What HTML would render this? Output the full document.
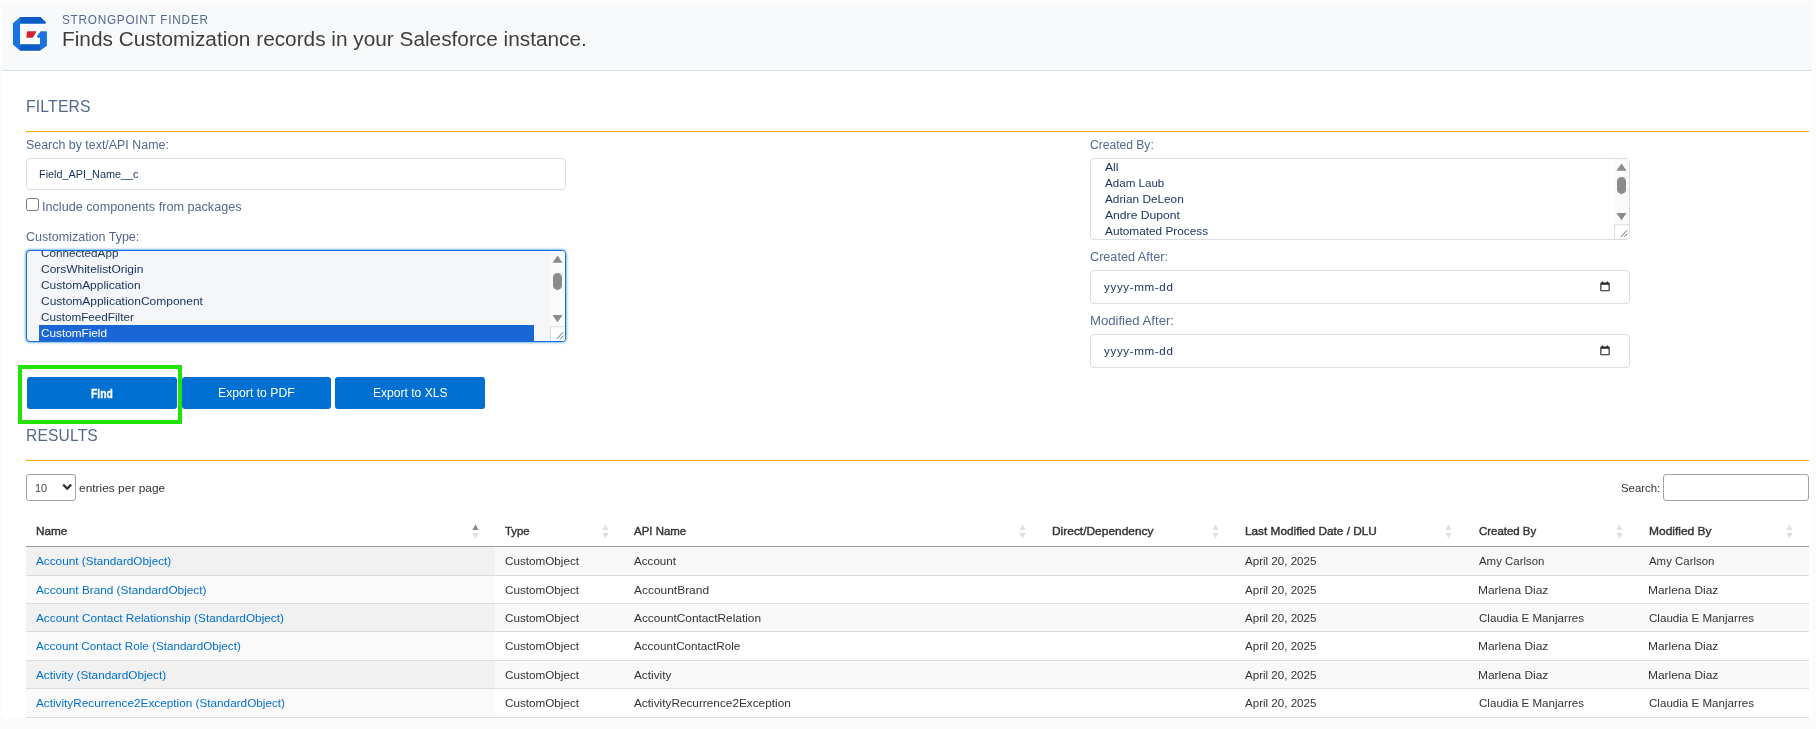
<!DOCTYPE html>
<html><head><meta charset="utf-8"><title>Strongpoint Finder</title>
<style>
*{box-sizing:border-box;margin:0;padding:0}
html,body{width:1816px;height:729px;overflow:hidden;background:#fcfcfc;font-family:"Liberation Sans",sans-serif}
.abs{position:absolute}
.t{position:absolute;white-space:nowrap;line-height:1;transform-origin:0 0;font-family:"Liberation Sans",sans-serif}
.line{position:absolute;height:1px;background:#ffa500;left:26px;width:1783px}
.inp{position:absolute;border:1px solid #d8dde6;border-radius:4px;background:#fff}
.btn{position:absolute;top:377px;height:32px;background:#0070d2;border-radius:3px}
.rb{position:absolute;left:26px;width:1783px;height:1px;background:#dddddd}
</style></head><body>
<div id="root" style="position:absolute;left:0;top:0;width:1816px;height:729px;will-change:transform;overflow:hidden">

<div class="abs" style="left:2px;top:3px;width:1810px;height:716px;background:#fff"></div>
<div class="abs" style="left:2px;top:3px;width:1810px;height:68px;background:#f7f9fb;border-bottom:1px solid #d8dde6"></div>
<svg class="abs" style="left:8px;top:12px" width="44" height="44" viewBox="8 12 44 44"><g stroke="#fff" stroke-width="1.3" stroke-linejoin="round"><path d="M20.07 16.95 H40.6 L46 22.3 Q46.4 23.77 45 23.77 H20.07 V44.3 H40 V37.65 H37.3 L37.15 36 L40.6 31.3 H46.9 V45.8 L40 50.8 H20.07 L12.95 44.6 V23.16 Z" fill="#fff"/><path d="M27.6 31.3 H36.67 L32.74 37.65 H27 Q26.3 37.65 26.4 37 L26.9 31.9 Q27 31.3 27.6 31.3 Z" fill="#fff"/></g><path d="M20.07 16.95 H40.6 L46 22.3 Q46.5 23.77 45 23.77 H20.07 Z" fill="#0b5cc4"/><path d="M20.07 16.95 L12.95 23.16 V44.6 L20.07 50.8 Z" fill="#1a73e2"/><path d="M20.07 44.2 H40 V50.8 H20.07 Z" fill="#0b5cc4"/><path d="M40 50.8 L46.9 45.8 V32 Q46.9 31.3 46.2 31.3 H40.6 L37.15 36 Q36.8 37.65 38 37.65 H40 Z" fill="#1a73e2"/><path d="M27.7 31.3 H36.67 L32.74 37.65 H27.1 Q26.3 37.65 26.4 36.9 L26.9 32 Q27 31.3 27.7 31.3 Z" fill="#d2232f"/></svg>
<div class="line" style="top:131px"></div><div class="line" style="top:460px"></div>
<div class="inp" style="left:26px;top:158px;width:540px;height:32px"></div>
<div class="abs" style="left:26px;top:198px;width:13px;height:13px;border:1px solid #767676;border-radius:2.5px;background:#fff"></div>
<div class="abs" style="left:26px;top:250px;width:540px;height:91.5px;border:1px solid #1b6fd8;border-radius:4px;background:#f4f6f9;box-shadow:0 0 3px #0070d2"></div>
<div class="abs" style="left:27px;top:251px;width:538px;height:89.5px;overflow:hidden;border-radius:3px"><div class="abs" style="left:-27px;top:-251px;width:1816px;height:729px"><div class="abs" style="left:39px;top:325px;width:495px;height:17px;background:#1a66d6"></div><div class="t" style="left:41.30px;top:248.00px;color:#16325c;font-size:11.5px;font-weight:400;;transform:scaleX(1.0171)">ConnectedApp</div>
<div class="t" style="left:41.30px;top:264.00px;color:#16325c;font-size:11.5px;font-weight:400;;transform:scaleX(1.0398)">CorsWhitelistOrigin</div>
<div class="t" style="left:41.30px;top:280.00px;color:#16325c;font-size:11.5px;font-weight:400;;transform:scaleX(1.0385)">CustomApplication</div>
<div class="t" style="left:41.30px;top:296.00px;color:#16325c;font-size:11.5px;font-weight:400;;transform:scaleX(1.0423)">CustomApplicationComponent</div>
<div class="t" style="left:41.30px;top:312.00px;color:#16325c;font-size:11.5px;font-weight:400;;transform:scaleX(1.0154)">CustomFeedFilter</div>
<div class="t" style="left:41.30px;top:328.00px;color:#ffffff;font-size:11.5px;font-weight:400;;transform:scaleX(1.0219)">CustomField</div><div class="abs" style="left:550px;top:251px;width:15px;height:90px;background:#fafafa"></div><svg class="abs" style="left:550px;top:251px" width="15" height="90" viewBox="0 0 15 90"><path d="M7.5 4.599999999999994 l4.7 6.6 q.3 .6 -.5 .6 h-8.4 q-.8 0 -.5 -.6 Z" fill="#8b8b8b"/><rect x="3" y="21.899999999999977" width="9" height="17" rx="4.5" fill="#8b8b8b"/><path d="M7.5 71.2 l4.7 -6.6 q.3 -.6 -.5 -.6 h-8.4 q-.8 0 -.5 .6 Z" fill="#8b8b8b"/><rect x="0.5" y="75.80000000000001" width="15" height="14.5" fill="#fff" stroke="#dcdcdc" stroke-width="1"/><path d="M7 87.80000000000001 L13 81.30000000000001 M10.5 87.80000000000001 L13.5 84.60000000000001" stroke="#555" stroke-width="0.9" fill="none"/></svg></div></div>
<div class="inp" style="left:1090px;top:158px;width:540px;height:81.5px"></div>
<div class="abs" style="left:1091px;top:159px;width:538px;height:79.5px;overflow:hidden;border-radius:3px"><div class="abs" style="left:-1091px;top:-159px;width:1816px;height:729px"><div class="abs" style="left:1614px;top:159px;width:15px;height:80px;background:#fafafa"></div><svg class="abs" style="left:1614px;top:159px" width="15" height="80" viewBox="0 0 15 80"><path d="M7.5 4.599999999999994 l4.7 6.6 q.3 .6 -.5 .6 h-8.4 q-.8 0 -.5 -.6 Z" fill="#8b8b8b"/><rect x="3" y="17.900000000000006" width="9" height="17" rx="4.5" fill="#8b8b8b"/><path d="M7.5 61.2 l4.7 -6.6 q.3 -.6 -.5 -.6 h-8.4 q-.8 0 -.5 .6 Z" fill="#8b8b8b"/><rect x="0.5" y="65.80000000000001" width="15" height="14.5" fill="#fff" stroke="#dcdcdc" stroke-width="1"/><path d="M7 77.80000000000001 L13 71.30000000000001 M10.5 77.80000000000001 L13.5 74.60000000000001" stroke="#555" stroke-width="0.9" fill="none"/></svg></div></div>
<div class="inp" style="left:1090px;top:270px;width:540px;height:34px"></div>
<div class="inp" style="left:1090px;top:334px;width:540px;height:34px"></div>
<svg class="abs" style="left:1600px;top:281px" width="10" height="11" viewBox="0 0 10 11"><path d="M1.9 0.4 h1.3 v1 h3.6 v-1 h1.3 v1 h0.6 q1 0 1 1 v6.9 q0 1 -1 1 h-7.4 q-1 0 -1 -1 v-6.9 q0 -1 1 -1 h0.6 Z M1.4 3.7 v5.5 h7.2 v-5.5 Z" fill="#222" fill-rule="evenodd"/></svg><svg class="abs" style="left:1600px;top:345px" width="10" height="11" viewBox="0 0 10 11"><path d="M1.9 0.4 h1.3 v1 h3.6 v-1 h1.3 v1 h0.6 q1 0 1 1 v6.9 q0 1 -1 1 h-7.4 q-1 0 -1 -1 v-6.9 q0 -1 1 -1 h0.6 Z M1.4 3.7 v5.5 h7.2 v-5.5 Z" fill="#222" fill-rule="evenodd"/></svg>
<div class="btn" style="left:27px;width:150px"></div><div class="btn" style="left:181.5px;width:149.5px"></div><div class="btn" style="left:335px;width:150px"></div>
<div class="abs" style="left:18px;top:365px;width:164.3px;height:59px;border:4px solid #22e305"></div>
<div class="abs" style="left:26px;top:474px;width:50px;height:27px;border:1px solid #a3a3a3;border-radius:3px;background:#fff"></div>
<svg class="abs" style="left:62px;top:483px" width="11" height="9" viewBox="0 0 11 9"><path d="M2 2.4 L5.2 5.6 L8.4 2.4" stroke="#333" stroke-width="2.2" fill="none" stroke-linecap="square" stroke-linejoin="miter"/></svg>
<div class="abs" style="left:1663px;top:474px;width:146px;height:27px;border:1px solid #a3a3a3;border-radius:3px;background:#fff"></div>
<div class="abs" style="left:26px;top:547px;width:1783px;height:28px;background:#f9f9f9"></div><div class="abs" style="left:26px;top:547px;width:468.6px;height:28px;background:#f1f1f1"></div>
<div class="abs" style="left:26px;top:576px;width:1783px;height:27px;background:#ffffff"></div><div class="abs" style="left:26px;top:576px;width:468.6px;height:27px;background:#fafafa"></div>
<div class="abs" style="left:26px;top:604px;width:1783px;height:27px;background:#f9f9f9"></div><div class="abs" style="left:26px;top:604px;width:468.6px;height:27px;background:#f1f1f1"></div>
<div class="abs" style="left:26px;top:632px;width:1783px;height:28px;background:#ffffff"></div><div class="abs" style="left:26px;top:632px;width:468.6px;height:28px;background:#fafafa"></div>
<div class="abs" style="left:26px;top:661px;width:1783px;height:27px;background:#f9f9f9"></div><div class="abs" style="left:26px;top:661px;width:468.6px;height:27px;background:#f1f1f1"></div>
<div class="abs" style="left:26px;top:689px;width:1783px;height:28px;background:#ffffff"></div><div class="abs" style="left:26px;top:689px;width:468.6px;height:28px;background:#fafafa"></div>
<div class="rb" style="top:575px"></div>
<div class="rb" style="top:603px"></div>
<div class="rb" style="top:631px"></div>
<div class="rb" style="top:660px"></div>
<div class="rb" style="top:688px"></div>
<div class="rb" style="top:717px"></div>
<div class="rb" style="top:546px;background:#9c9c9c"></div>
<svg class="abs" style="left:471.7px;top:524px" width="7" height="15" viewBox="0 0 7 15"><path d="M3.5 0.3 L6.55 5.9 H0.45 Z" fill="#8a8a8a"/><path d="M0.45 9.1 H6.55 L3.5 14.7 Z" fill="#e0e0e0"/></svg>
<svg class="abs" style="left:601.7px;top:524px" width="7" height="15" viewBox="0 0 7 15"><path d="M3.5 0.3 L6.55 5.9 H0.45 Z" fill="#e0e0e0"/><path d="M0.45 9.1 H6.55 L3.5 14.7 Z" fill="#e0e0e0"/></svg>
<svg class="abs" style="left:1018.6px;top:524px" width="7" height="15" viewBox="0 0 7 15"><path d="M3.5 0.3 L6.55 5.9 H0.45 Z" fill="#e0e0e0"/><path d="M0.45 9.1 H6.55 L3.5 14.7 Z" fill="#e0e0e0"/></svg>
<svg class="abs" style="left:1211.8px;top:524px" width="7" height="15" viewBox="0 0 7 15"><path d="M3.5 0.3 L6.55 5.9 H0.45 Z" fill="#e0e0e0"/><path d="M0.45 9.1 H6.55 L3.5 14.7 Z" fill="#e0e0e0"/></svg>
<svg class="abs" style="left:1445.2px;top:524px" width="7" height="15" viewBox="0 0 7 15"><path d="M3.5 0.3 L6.55 5.9 H0.45 Z" fill="#e0e0e0"/><path d="M0.45 9.1 H6.55 L3.5 14.7 Z" fill="#e0e0e0"/></svg>
<svg class="abs" style="left:1615.8px;top:524px" width="7" height="15" viewBox="0 0 7 15"><path d="M3.5 0.3 L6.55 5.9 H0.45 Z" fill="#e0e0e0"/><path d="M0.45 9.1 H6.55 L3.5 14.7 Z" fill="#e0e0e0"/></svg>
<svg class="abs" style="left:1786px;top:524px" width="7" height="15" viewBox="0 0 7 15"><path d="M3.5 0.3 L6.55 5.9 H0.45 Z" fill="#e0e0e0"/><path d="M0.45 9.1 H6.55 L3.5 14.7 Z" fill="#e0e0e0"/></svg>
<div class="abs" style="left:0;top:718px;width:1816px;height:11px;background:#fbfbfb"></div>
<div class="t" style="left:61.62px;top:14.00px;color:#54698d;font-size:12px;font-weight:400;letter-spacing:0.75px;transform:scaleX(0.9823)">STRONGPOINT FINDER</div>
<div class="t" style="left:62.06px;top:29.00px;color:#3e3e3c;font-size:20px;font-weight:400;;transform:scaleX(1.0400)">Finds Customization records in your Salesforce instance.</div>
<div class="t" style="left:25.57px;top:98.00px;color:#54698d;font-size:17px;font-weight:400;letter-spacing:0.2px;transform:scaleX(0.9250)">FILTERS</div>
<div class="t" style="left:25.58px;top:427.00px;color:#54698d;font-size:17px;font-weight:400;letter-spacing:0.2px;transform:scaleX(0.9156)">RESULTS</div>
<div class="t" style="left:25.57px;top:139.00px;color:#54698d;font-size:12px;font-weight:400;;transform:scaleX(1.0346)">Search by text/API Name:</div>
<div class="t" style="left:39.11px;top:169.00px;color:#16325c;font-size:11px;font-weight:400;;transform:scaleX(0.9860)">Field_API_Name__c</div>
<div class="t" style="left:41.85px;top:201.00px;color:#54698d;font-size:12px;font-weight:400;;transform:scaleX(1.0537)">Include components from packages</div>
<div class="t" style="left:26.00px;top:231.00px;color:#54698d;font-size:12px;font-weight:400;;transform:scaleX(1.0444)">Customization Type:</div>
<div class="t" style="left:1090.40px;top:139.00px;color:#54698d;font-size:12px;font-weight:400;;transform:scaleX(1.0063)">Created By:</div>
<div class="t" style="left:1090.40px;top:251.00px;color:#54698d;font-size:12px;font-weight:400;;transform:scaleX(1.0534)">Created After:</div>
<div class="t" style="left:1089.51px;top:315.00px;color:#54698d;font-size:12px;font-weight:400;;transform:scaleX(1.0947)">Modified After:</div>
<div class="t" style="left:1103.70px;top:282.00px;color:#16325c;font-size:11px;font-weight:400;letter-spacing:0.6px;transform:scaleX(1.0554)">yyyy-mm-dd</div>
<div class="t" style="left:1103.70px;top:346.00px;color:#16325c;font-size:11px;font-weight:400;letter-spacing:0.6px;transform:scaleX(1.0554)">yyyy-mm-dd</div>
<div class="t" style="left:1104.80px;top:162.00px;color:#16325c;font-size:11.5px;font-weight:400;;transform:scaleX(1.0583)">All</div>
<div class="t" style="left:1104.80px;top:178.00px;color:#16325c;font-size:11.5px;font-weight:400;;transform:scaleX(1.0085)">Adam Laub</div>
<div class="t" style="left:1104.80px;top:194.00px;color:#16325c;font-size:11.5px;font-weight:400;;transform:scaleX(1.0263)">Adrian DeLeon</div>
<div class="t" style="left:1104.80px;top:210.00px;color:#16325c;font-size:11.5px;font-weight:400;;transform:scaleX(1.0563)">Andre Dupont</div>
<div class="t" style="left:1104.80px;top:226.00px;color:#16325c;font-size:11.5px;font-weight:400;;transform:scaleX(1.0270)">Automated Process</div>
<div class="t" style="left:90.94px;top:388.00px;color:#ffffff;font-size:12px;font-weight:700;-webkit-text-stroke:0.3px #fff;transform:scaleX(0.8583)">Find</div>
<div class="t" style="left:218.32px;top:387.00px;color:#ffffff;font-size:12.5px;font-weight:400;;transform:scaleX(0.9779)">Export to PDF</div>
<div class="t" style="left:373.43px;top:387.00px;color:#ffffff;font-size:12.5px;font-weight:400;;transform:scaleX(0.9658)">Export to XLS</div>
<div class="t" style="left:34.95px;top:483.00px;color:#444;font-size:11.5px;font-weight:400;;transform:scaleX(0.9500)">10</div>
<div class="t" style="left:78.90px;top:483.00px;color:#333333;font-size:11.5px;font-weight:400;;transform:scaleX(1.0373)">entries per page</div>
<div class="t" style="left:1621.00px;top:483.00px;color:#333333;font-size:11.5px;font-weight:400;;transform:scaleX(0.9897)">Search:</div>
<div class="t" style="left:36.20px;top:526.00px;color:#333333;font-size:11.5px;font-weight:400;-webkit-text-stroke:0.4px #333;transform:scaleX(1.0226)">Name</div>
<div class="t" style="left:505.20px;top:526.00px;color:#333333;font-size:11.5px;font-weight:400;-webkit-text-stroke:0.4px #333;transform:scaleX(0.9800)">Type</div>
<div class="t" style="left:634.20px;top:526.00px;color:#333333;font-size:11.5px;font-weight:400;-webkit-text-stroke:0.4px #333;transform:scaleX(0.9962)">API Name</div>
<div class="t" style="left:1051.80px;top:526.00px;color:#333333;font-size:11.5px;font-weight:400;-webkit-text-stroke:0.4px #333;transform:scaleX(1.0378)">Direct/Dependency</div>
<div class="t" style="left:1244.80px;top:526.00px;color:#333333;font-size:11.5px;font-weight:400;-webkit-text-stroke:0.4px #333;transform:scaleX(1.0258)">Last Modified Date / DLU</div>
<div class="t" style="left:1478.50px;top:526.00px;color:#333333;font-size:11.5px;font-weight:400;-webkit-text-stroke:0.4px #333;transform:scaleX(0.9931)">Created By</div>
<div class="t" style="left:1649.00px;top:526.00px;color:#333333;font-size:11.5px;font-weight:400;-webkit-text-stroke:0.4px #333;transform:scaleX(1.0417)">Modified By</div>
<div class="t" style="left:36.20px;top:556.00px;color:#0070d2;font-size:11.5px;font-weight:400;;transform:scaleX(1.0220)">Account (StandardObject)</div>
<div class="t" style="left:505.30px;top:556.00px;color:#333333;font-size:11.5px;font-weight:400;;transform:scaleX(1.0164)">CustomObject</div>
<div class="t" style="left:634.30px;top:556.00px;color:#333333;font-size:11.5px;font-weight:400;;transform:scaleX(1.0119)">Account</div>
<div class="t" style="left:1244.80px;top:556.00px;color:#333333;font-size:11.5px;font-weight:400;;transform:scaleX(1.0056)">April 20, 2025</div>
<div class="t" style="left:1478.60px;top:556.00px;color:#333333;font-size:11.5px;font-weight:400;;transform:scaleX(0.9939)">Amy Carlson</div>
<div class="t" style="left:1649.00px;top:556.00px;color:#333333;font-size:11.5px;font-weight:400;;transform:scaleX(0.9939)">Amy Carlson</div>
<div class="t" style="left:36.20px;top:585.00px;color:#0070d2;font-size:11.5px;font-weight:400;;transform:scaleX(1.0253)">Account Brand (StandardObject)</div>
<div class="t" style="left:505.30px;top:585.00px;color:#333333;font-size:11.5px;font-weight:400;;transform:scaleX(1.0164)">CustomObject</div>
<div class="t" style="left:634.30px;top:585.00px;color:#333333;font-size:11.5px;font-weight:400;;transform:scaleX(1.0389)">AccountBrand</div>
<div class="t" style="left:1244.80px;top:585.00px;color:#333333;font-size:11.5px;font-weight:400;;transform:scaleX(1.0056)">April 20, 2025</div>
<div class="t" style="left:1477.56px;top:585.00px;color:#333333;font-size:11.5px;font-weight:400;;transform:scaleX(1.0379)">Marlena Diaz</div>
<div class="t" style="left:1647.96px;top:585.00px;color:#333333;font-size:11.5px;font-weight:400;;transform:scaleX(1.0379)">Marlena Diaz</div>
<div class="t" style="left:36.20px;top:613.00px;color:#0070d2;font-size:11.5px;font-weight:400;;transform:scaleX(1.0261)">Account Contact Relationship (StandardObject)</div>
<div class="t" style="left:505.30px;top:613.00px;color:#333333;font-size:11.5px;font-weight:400;;transform:scaleX(1.0164)">CustomObject</div>
<div class="t" style="left:634.30px;top:613.00px;color:#333333;font-size:11.5px;font-weight:400;;transform:scaleX(1.0293)">AccountContactRelation</div>
<div class="t" style="left:1244.80px;top:613.00px;color:#333333;font-size:11.5px;font-weight:400;;transform:scaleX(1.0056)">April 20, 2025</div>
<div class="t" style="left:1478.60px;top:613.00px;color:#333333;font-size:11.5px;font-weight:400;;transform:scaleX(1.0077)">Claudia E Manjarres</div>
<div class="t" style="left:1649.00px;top:613.00px;color:#333333;font-size:11.5px;font-weight:400;;transform:scaleX(1.0077)">Claudia E Manjarres</div>
<div class="t" style="left:36.20px;top:641.00px;color:#0070d2;font-size:11.5px;font-weight:400;;transform:scaleX(1.0139)">Account Contact Role (StandardObject)</div>
<div class="t" style="left:505.30px;top:641.00px;color:#333333;font-size:11.5px;font-weight:400;;transform:scaleX(1.0164)">CustomObject</div>
<div class="t" style="left:634.30px;top:641.00px;color:#333333;font-size:11.5px;font-weight:400;;transform:scaleX(1.0143)">AccountContactRole</div>
<div class="t" style="left:1244.80px;top:641.00px;color:#333333;font-size:11.5px;font-weight:400;;transform:scaleX(1.0056)">April 20, 2025</div>
<div class="t" style="left:1477.56px;top:641.00px;color:#333333;font-size:11.5px;font-weight:400;;transform:scaleX(1.0379)">Marlena Diaz</div>
<div class="t" style="left:1647.96px;top:641.00px;color:#333333;font-size:11.5px;font-weight:400;;transform:scaleX(1.0379)">Marlena Diaz</div>
<div class="t" style="left:36.20px;top:670.00px;color:#0070d2;font-size:11.5px;font-weight:400;;transform:scaleX(1.0236)">Activity (StandardObject)</div>
<div class="t" style="left:505.30px;top:670.00px;color:#333333;font-size:11.5px;font-weight:400;;transform:scaleX(1.0164)">CustomObject</div>
<div class="t" style="left:634.30px;top:670.00px;color:#333333;font-size:11.5px;font-weight:400;;transform:scaleX(1.0243)">Activity</div>
<div class="t" style="left:1244.80px;top:670.00px;color:#333333;font-size:11.5px;font-weight:400;;transform:scaleX(1.0056)">April 20, 2025</div>
<div class="t" style="left:1477.56px;top:670.00px;color:#333333;font-size:11.5px;font-weight:400;;transform:scaleX(1.0379)">Marlena Diaz</div>
<div class="t" style="left:1647.96px;top:670.00px;color:#333333;font-size:11.5px;font-weight:400;;transform:scaleX(1.0379)">Marlena Diaz</div>
<div class="t" style="left:36.20px;top:698.00px;color:#0070d2;font-size:11.5px;font-weight:400;;transform:scaleX(1.0226)">ActivityRecurrence2Exception (StandardObject)</div>
<div class="t" style="left:505.30px;top:698.00px;color:#333333;font-size:11.5px;font-weight:400;;transform:scaleX(1.0164)">CustomObject</div>
<div class="t" style="left:634.30px;top:698.00px;color:#333333;font-size:11.5px;font-weight:400;;transform:scaleX(1.0263)">ActivityRecurrence2Exception</div>
<div class="t" style="left:1244.80px;top:698.00px;color:#333333;font-size:11.5px;font-weight:400;;transform:scaleX(1.0056)">April 20, 2025</div>
<div class="t" style="left:1478.60px;top:698.00px;color:#333333;font-size:11.5px;font-weight:400;;transform:scaleX(1.0077)">Claudia E Manjarres</div>
<div class="t" style="left:1649.00px;top:698.00px;color:#333333;font-size:11.5px;font-weight:400;;transform:scaleX(1.0077)">Claudia E Manjarres</div>
</div></body></html>
